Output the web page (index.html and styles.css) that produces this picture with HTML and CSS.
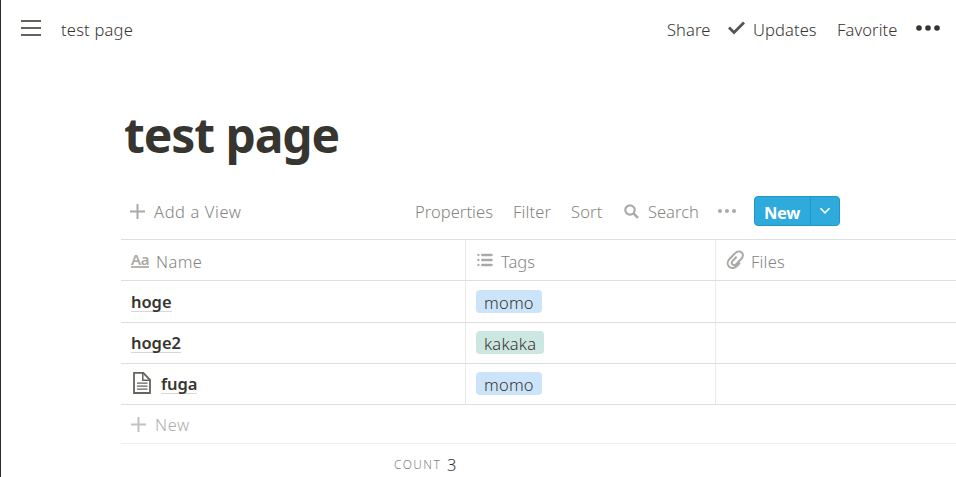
FILE: index.html
```html
<!DOCTYPE html>
<html lang="en">
<head>
<meta charset="utf-8">
<title>test page</title>
<link rel="stylesheet" href="styles.css">
</head>
<body>
<div class="app">
  <header class="topbar">
    <svg class="menu" width="20" height="18" viewBox="0 0 20 18"><path d="M0 2h20M0 9h20M0 16h20" stroke="#64635d" stroke-width="2"/></svg>
    <span class="crumb">test page</span>
    <nav class="actions">
      <span class="share">Share</span>
      <svg class="check" width="17" height="14" viewBox="0 0 17 14"><path d="M1 6.6L6 11.6L16 1.4" fill="none" stroke="#555550" stroke-width="2.8"/></svg>
      <span class="updates">Updates</span>
      <span class="favorite">Favorite</span>
      <svg class="dots" width="24" height="6" viewBox="0 0 24 6" fill="#37352f"><circle cx="3" cy="3" r="2.8"/><circle cx="12" cy="3" r="2.8"/><circle cx="21" cy="3" r="2.8"/></svg>
    </nav>
  </header>
  <main>
    <h1>test page</h1>
    <div class="toolbar">
      <svg class="plus" width="15" height="15" viewBox="0 0 15 15"><path d="M0 7.5h15M7.5 0v15" stroke="#aaa9a6" stroke-width="2"/></svg>
      <span class="add-view">Add a View</span>
      <span class="properties">Properties</span>
      <span class="filter">Filter</span>
      <span class="sort">Sort</span>
      <svg class="search-icon" width="15" height="15" viewBox="0 0 15 15" fill="none" stroke="#aaa9a6"><circle cx="6" cy="6" r="4.7" stroke-width="2.2"/><path d="M9.4 9.4L14 13.8" stroke-width="2.5"/></svg>
      <span class="search">Search</span>
      <svg class="more" width="18" height="4" viewBox="0 0 18 4" fill="#aaa9a6"><circle cx="2" cy="2" r="2"/><circle cx="9" cy="2" r="2"/><circle cx="16" cy="2" r="2"/></svg>
      <div class="new-button"><span class="new-label">New</span><span class="new-arrow"><svg width="12" height="8" viewBox="0 0 12 8"><path d="M1.5 1.2L6 5.8L10.5 1.2" fill="none" stroke="#fff" stroke-width="1.6"/></svg></span></div>
    </div>
    <div class="table">
      <div class="row head">
        <div class="cell"><span class="aa">Aa</span><span class="h-name">Name</span></div>
        <div class="cell"><svg class="type-icon" width="16" height="14" viewBox="0 0 16 14" stroke="#aaa9a6" stroke-width="2.3" stroke-linecap="round"><path d="M5.2 2h9.4M5.2 7h9.4M5.2 12h9.4"/><path d="M1.4 2h.01M1.4 7h.01M1.4 12h.01"/></svg><span class="h-tags">Tags</span></div>
        <div class="cell"><svg class="type-icon clip" width="18" height="20" viewBox="0 0 18 20"><path d="M14 12.8L11.2 15.8C8.8 18.4 5.1 18.7 3 16.6C1 14.6 1.3 11.3 3.5 9L9.2 3.1C11.2 1 14 .9 15.7 2.5C17.4 4.2 17.2 6.8 15.4 8.7L10.2 14.1C9 15.3 7.4 15.4 6.4 14.4C5.4 13.4 5.6 11.9 6.7 10.8L10.6 6.8" fill="none" stroke="#aaa9a6" stroke-width="2"/></svg><span class="h-files">Files</span></div>
      </div>
      <div class="row tall"><div class="cell"><span class="title hoge">hoge</span></div><div class="cell"><span class="tag blue">momo</span></div><div class="cell"></div></div>
      <div class="row"><div class="cell"><span class="title hoge2">hoge2</span></div><div class="cell"><span class="tag green">kakaka</span></div><div class="cell"></div></div>
      <div class="row"><div class="cell"><svg class="page-icon" width="18" height="22" viewBox="0 0 18 22" fill="none" stroke="#64635d"><path d="M1 .8H10.2L17 7.8V21H1Z" stroke-width="1.8"/><path d="M9.8 1V8.3H17" stroke-width="1.5"/><path d="M4 11.2h10.5M4 14.2h10.5M4 17.2h10.5" stroke-width="1.3"/></svg><span class="title fuga">fuga</span></div><div class="cell"><span class="tag blue">momo</span></div><div class="cell"></div></div>
    </div>
    <div class="add-row"><svg width="15" height="15" viewBox="0 0 15 15"><path d="M0 7.5h15M7.5 0v15" stroke="#c3c2bf" stroke-width="2"/></svg><span>New</span></div>
    <footer><span class="count">COUNT</span><span class="value">3</span></footer>
  </main>
</div>
</body>
</html>
```
FILE: styles.css
```css
* { box-sizing: border-box; }
body { margin: 0; background: #fff; font-family: "Noto Sans", "Open Sans", sans-serif; font-weight: 300; font-size: 16.5px; line-height: 24px; color: #37352f; overflow: hidden; }
.app { height: 477px; border-left: 1px solid #2b2829; overflow: hidden; }
svg { display: block; flex: none; }
span { white-space: nowrap; }
.topbar { display: flex; align-items: center; height: 60px; padding-left: 20px; }
.menu { margin-top: -4px; }
.crumb { margin-left: 20px; letter-spacing: .22px; }
.actions { display: flex; align-items: center; margin-left: auto; width: 289px; }
.share { width: 61px; letter-spacing: .1px; }
.check { margin-top: -4px; }
.updates { width: 84px; margin-left: 8px; letter-spacing: .1px; }
.favorite { width: 79px; letter-spacing: .1px; }
.dots { margin-top: -4px; }
main { padding-left: 120px; }
h1 { margin: 0; padding: 44px 0 0 3px; height: 136px; font-size: 48px; font-weight: 700; line-height: 62px; letter-spacing: -1.1px; }
.toolbar { display: flex; align-items: center; height: 43px; padding: 0 0 13px 9px; color: #85847f; }
.toolbar > span { padding-top: 2px; }
.plus { margin-right: 9px; }
.add-view { width: 261px; letter-spacing: .6px; }
.properties { width: 98px; letter-spacing: .05px; }
.filter { width: 58px; letter-spacing: .15px; }
.sort { width: 53px; letter-spacing: .15px; }
.search-icon { margin: 0 9px 0 0; }
.search { width: 70px; }
.more { margin-right: 18px; }
.new-button { display: flex; width: 86px; height: 30px; border: 1px solid #2496c4; border-radius: 4px; background: #2eaadc; color: #fff; }
.new-label { width: 56px; padding-left: 9px; line-height: 31px; border-right: 1px solid #2496c4; font-weight: 700; letter-spacing: -.3px; }
.new-arrow { flex: 1; display: flex; align-items: center; justify-content: center; }
.table { border-top: 1px solid #dededd; }
.row { display: grid; grid-template-columns: 345px 250px 1fr; height: 41px; border-bottom: 1px solid #dededd; }
.row.tall { height: 42px; }
.cell { display: flex; align-items: center; padding-left: 10px; }
.cell:not(:last-child) { border-right: 1px solid #e9e9e8; }
.head { color: #85847f; }
.head .cell span { margin-top: 3px; }
.head .cell .aa { width: 18px; height: 15px; margin-top: 0; font-size: 15px; font-weight: 600; line-height: 12px; color: #aaa9a6; border-bottom: 2px solid #b5b4b1; letter-spacing: -.3px; }
.h-name { margin-left: 7px; letter-spacing: .4px; }
.h-tags { margin-left: 8px; }
.type-icon { margin-left: 1px; }
.type-icon.clip { margin-left: 0; }
.clip + .h-files { margin-left: 7px; letter-spacing: .2px; }
.title { height: 21px; line-height: 21px; font-weight: 600; border-bottom: 1px solid #d8d7d5; letter-spacing: -.05px; }
.tag { height: 23px; padding: 0 8px; border-radius: 4px; line-height: 25px; letter-spacing: .2px; }
.row:not(.tall) .title, .row:not(.tall) .tag { margin-top: -2px; }
.blue { background: #cce4f9; }
.green { background: #cce7e1; }
.page-icon { margin: -3px 10px 0 2px; }
.add-row { display: flex; align-items: center; gap: 9px; height: 39px; padding-left: 10px; border-bottom: 1px solid #ededec; color: #aeadaa; }
.add-row span { padding-top: 1px; letter-spacing: .6px; }
footer { display: flex; align-items: center; height: 42px; padding-left: 273px; }
.count { width: 53px; font-size: 12px; letter-spacing: 1.4px; color: #85847f; }
```
